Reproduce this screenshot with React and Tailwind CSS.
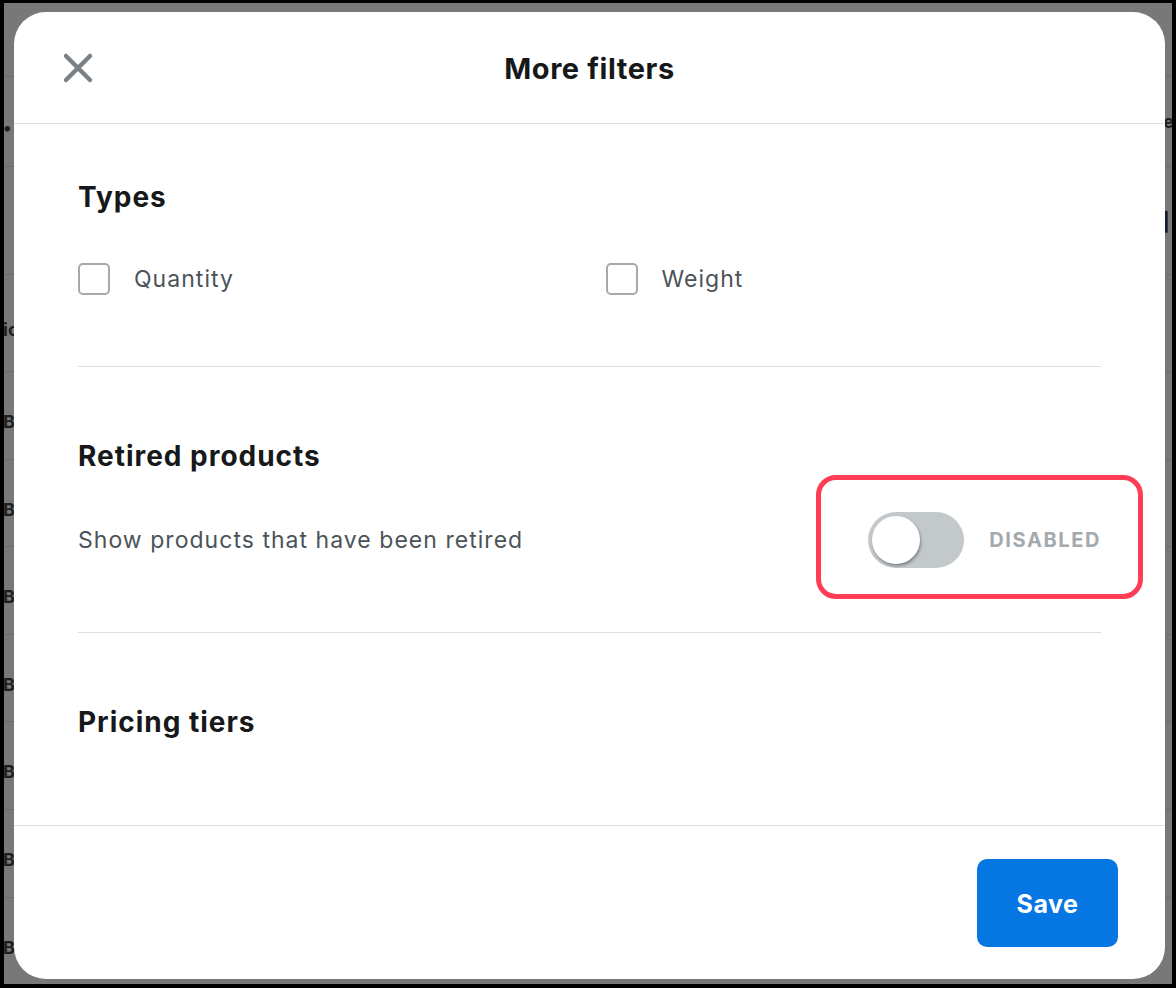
import React, { useState } from 'react';

const rows = [
  { h: 'h-[74px]', left: '', right: '' },
  { h: 'h-[90px]', left: '• •', right: 'e' },
  { h: 'h-[108px]', left: '', right: '▌' },
  { h: 'h-[97px]', left: 'ic', right: '' },
  { h: 'h-[88px]', left: 'B', right: '' },
  { h: 'h-[87px]', left: 'B', right: '' },
  { h: 'h-[88px]', left: 'B', right: '' },
  { h: 'h-[87px]', left: 'B', right: '' },
  { h: 'h-[88px]', left: 'B', right: '' },
  { h: 'h-[88px]', left: 'B', right: '' },
  { h: 'h-[88px]', left: 'B', right: '' },
];

const Checkbox = ({ label }) => {
  const [on, setOn] = useState(false);
  return (
    <label className="flex items-center gap-6 cursor-pointer" onClick={() => setOn(!on)}>
      <span className={`w-8 h-8 rounded-[5px] border-2 ${on ? 'border-[#0677e2] bg-[#0677e2]' : 'border-[#a5aaae] bg-white'}`}></span>
      <span className="text-[23px] leading-8 tracking-[0.045em] text-[#4b5359]">{label}</span>
    </label>
  );
};

export default function App() {
  const [retired, setRetired] = useState(false);

  return (
    <div className="relative w-[1176px] h-[988px] overflow-hidden bg-[#787878] border-l-4 border-r-4 border-t-[3px] border-b-4 border-black" style={{ fontFamily: 'Inter, "Noto Sans", sans-serif' }}>
      {/* backdrop table */}
      <div className="flex flex-col">
        {rows.map((r, i) => (
          <div key={i} className={`${r.h} flex items-center justify-between border-b border-[#6c6c6c] text-[18px] font-bold text-[#1e1e1e]`}>
            <span className="-ml-[1px] pt-3">{r.left}</span>
            <span className="-mr-[2px]">{r.right}</span>
          </div>
        ))}
      </div>

      {/* modal */}
      <div className="absolute left-[10px] top-[9px] w-[1151px] h-[967px] bg-white rounded-[32px] flex flex-col">
        <div className="h-[112px] shrink-0 grid grid-cols-[1fr_auto_1fr] items-center px-12 border-b border-[#dedede]">
          <button className="w-8 h-8 text-[#7a8186]">
            <svg viewBox="0 0 32 32" width="32" height="32" fill="none" stroke="currentColor" strokeWidth="4.5" strokeLinecap="round">
              <path d="M4 4 L28 28 M28 4 L4 28" />
            </svg>
          </button>
          <h1 className="text-[29px] font-bold text-[#16181a] tracking-[0.02em] pt-[2px]">More filters</h1>
          <div></div>
        </div>

        <div className="flex-1 px-16">
          <section className="pt-[55px] pb-[71px] border-b border-[#dedede]">
            <h2 className="text-[28px] leading-9 font-bold tracking-[0.035em] text-[#16181a]">Types</h2>
            <div className="grid grid-cols-2 gap-x-8 mt-12">
              <Checkbox label="Quantity" />
              <Checkbox label="Weight" />
            </div>
          </section>

          <section className="pt-[71px] pb-16 border-b border-[#dedede] relative">
            <h2 className="text-[28px] leading-9 font-bold tracking-[0.035em] text-[#16181a]">Retired products</h2>
            <div className="flex items-center justify-between mt-[38px]">
              <span className="text-[23px] leading-8 tracking-[0.045em] text-[#4b5359]">Show products that have been retired</span>
              <div className="flex items-center gap-6">
                <button
                  onClick={() => setRetired(!retired)}
                  className={`w-24 h-14 rounded-full p-1 flex ${retired ? 'bg-[#0677e2] justify-end' : 'bg-[#c3c8cb] justify-start'}`}
                >
                  <span className="w-12 h-12 rounded-full bg-white shadow-[1px_2px_3px_rgba(0,0,0,0.35)]"></span>
                </button>
                <span className="text-[20px] font-bold tracking-[0.08em] text-[#a3a9ad] w-[113px] text-right">{retired ? 'ENABLED' : 'DISABLED'}</span>
              </div>
            </div>
            <div className="absolute left-[738px] top-[108px] w-[327px] h-[124px] rounded-[20px] border-[5px] border-[#ff3d55] pointer-events-none"></div>
          </section>

          <section className="pt-[71px]">
            <h2 className="text-[28px] leading-9 font-bold tracking-[0.035em] text-[#16181a]">Pricing tiers</h2>
          </section>
        </div>

        <div className="h-[154px] shrink-0 border-t border-[#dedede] flex justify-end items-start pt-[33px] pr-[47px]">
          <button className="w-[141px] h-[88px] rounded-[10px] bg-[#0677e2] text-white text-[25px] font-bold tracking-[0.02em] pt-[4px]">Save</button>
        </div>
      </div>
    </div>
  );
}
